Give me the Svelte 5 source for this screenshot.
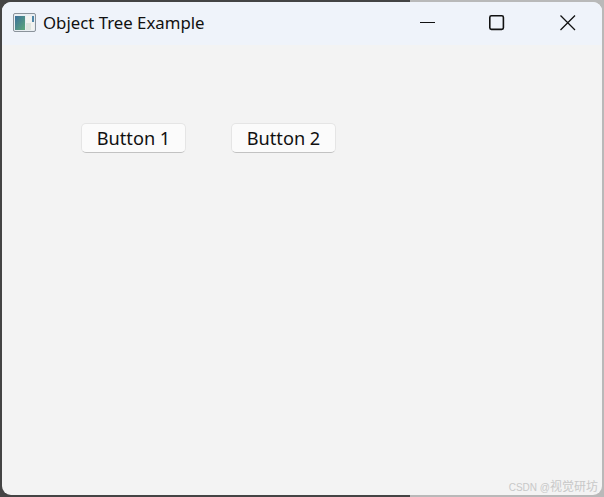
<script>
	let buttons = ['Button 1', 'Button 2'];
</script>

<div class="desktop">
	<div class="window">
		<!-- Title bar -->
		<div class="titlebar">
			<svg class="app-icon" width="24" height="20" viewBox="0 0 24 20">
				<defs>
					<linearGradient id="pane" x1="0" y1="0" x2="1" y2="1">
						<stop offset="0" stop-color="#3a6f9c" />
						<stop offset="1" stop-color="#5fa878" />
					</linearGradient>
				</defs>
				<rect x="0.5" y="0.5" width="22" height="18" rx="1.5" fill="#e9eef2" stroke="#8b939b" />
				<rect x="2" y="3" width="10" height="14" fill="url(#pane)" />
				<rect x="13" y="3" width="8" height="14" fill="#f2f3f0" />
				<rect x="19" y="3" width="2" height="6" fill="#4f86a8" />
				<rect x="13" y="10" width="5" height="7" fill="#dfe5df" />
			</svg>
			<span class="title">Object Tree Example</span>
			<div class="controls">
				<svg class="min" width="16" height="16" viewBox="0 0 16 16">
					<path d="M0 7.5H15" stroke="#111" stroke-width="1" fill="none" />
				</svg>
				<svg class="max" width="16" height="16" viewBox="0 0 16 16">
					<rect x="0.8" y="0.8" width="13.6" height="13.6" rx="1.6" stroke="#111" stroke-width="1.6" fill="none" />
				</svg>
				<svg class="close" width="16" height="16" viewBox="0 0 16 16">
					<path d="M0.5 0.5L15 15M15 0.5L0.5 15" stroke="#111" stroke-width="1.3" fill="none" />
				</svg>
			</div>
		</div>

		<!-- Client area -->
		<div class="content">
			{#each buttons as label}
				<button>{label}</button>
			{/each}
		</div>
	</div>
	<span class="watermark"><small>CSDN @</small>视觉研坊</span>
</div>

<style>
	:global(body) {
		margin: 0;
		background: #444;
	}

	.desktop {
		position: relative;
		width: 604px;
		height: 497px;
		box-sizing: border-box;
		padding: 2px;
		overflow: hidden;
		background: linear-gradient(to right, #444 410px, #b9b9b9 410px);
	}

	.window {
		height: 100%;
		display: flex;
		flex-direction: column;
		border-radius: 9px;
		overflow: hidden;
		background: #f3f3f3;
		font-family: "Noto Sans", "Open Sans", sans-serif;
	}

	.titlebar {
		height: 43px;
		flex-shrink: 0;
		display: flex;
		align-items: center;
		background: #eff3fa;
		padding-left: 11px;
		box-sizing: border-box;
	}

	.app-icon {
		flex-shrink: 0;
		margin-right: 6px;
		margin-top: -1px;
	}

	.title {
		font-size: 16.8px;
		color: #111;
		margin-top: -3px;
	}

	.controls {
		margin-left: auto;
		display: flex;
		align-items: center;
		padding-right: 26px;
		margin-top: -1px;
	}

	.controls svg {
		display: block;
	}

	.controls .max {
		margin-left: 53px;
	}

	.controls .close {
		margin-left: 55px;
	}

	.content {
		flex: 1;
		display: flex;
		align-items: flex-start;
		gap: 45px;
		padding: 78px 0 0 79px;
	}

	button {
		width: 105px;
		height: 30px;
		padding: 0;
		box-sizing: border-box;
		border: 1px solid #e5e5e5;
		border-bottom: 1px solid #c2c2c2;
		border-radius: 5px;
		background: #fbfbfb;
		color: #111;
		font-family: inherit;
		font-size: 18.2px;
		line-height: 1;
	}

	.watermark {
		position: absolute;
		right: 6px;
		bottom: 3px;
		font-family: "Liberation Sans", "Noto Sans CJK SC", sans-serif;
		font-size: 12px;
		color: #c8c8c8;
	}

	.watermark small {
		font-size: 10px;
	}
</style>
